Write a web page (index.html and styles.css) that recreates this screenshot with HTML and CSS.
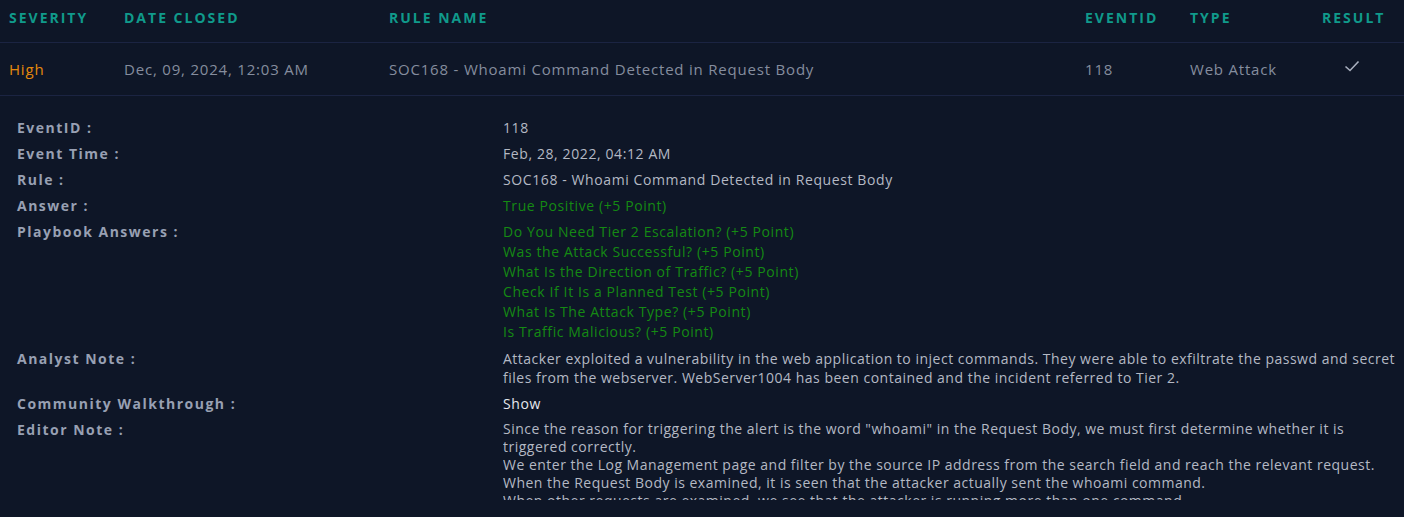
FILE: index.html
```html
<!DOCTYPE html>
<html lang="en">
<head>
    <meta charset="UTF-8">
    <title>Investigated Alerts</title>
    <link rel="stylesheet" href="styles.css">
</head>
<body>
    <table class="alerts">
        <thead>
            <tr>
                <th class="c-sev">Severity</th>
                <th class="c-date">Date Closed</th>
                <th class="c-rule">Rule Name</th>
                <th class="c-id">EventID</th>
                <th class="c-type">Type</th>
                <th class="c-res">Result</th>
            </tr>
        </thead>
        <tbody>
            <tr>
                <td class="high">High</td>
                <td>Dec, 09, 2024, 12:03 AM</td>
                <td>SOC168 - Whoami Command Detected in Request Body</td>
                <td>118</td>
                <td>Web Attack</td>
                <td class="c-res">
                    <svg class="check" width="16" height="12" viewBox="0 0 16 12"><path d="M1.5 6.5 L6 10.5 L14.5 1.5" fill="none" stroke="#a9b0bf" stroke-width="1.6"/></svg>
                </td>
            </tr>
        </tbody>
    </table>

    <div class="details">
        <div class="row"><div class="label">EventID :</div><div class="value">118</div></div>
        <div class="row"><div class="label">Event Time :</div><div class="value">Feb, 28, 2022, 04:12 AM</div></div>
        <div class="row"><div class="label">Rule :</div><div class="value">SOC168 - Whoami Command Detected in Request Body</div></div>
        <div class="row"><div class="label">Answer :</div><div class="value ok">True Positive (+5 Point)</div></div>
        <div class="row"><div class="label">Playbook Answers :</div>
            <div class="value ok">
                <div>Do You Need Tier 2 Escalation? (+5 Point)</div>
                <div>Was the Attack Successful? (+5 Point)</div>
                <div>What Is the Direction of Traffic? (+5 Point)</div>
                <div>Check If It Is a Planned Test (+5 Point)</div>
                <div>What Is The Attack Type? (+5 Point)</div>
                <div>Is Traffic Malicious? (+5 Point)</div>
            </div>
        </div>
        <div class="row"><div class="label">Analyst Note :</div><div class="value note">Attacker exploited a vulnerability in the web application to inject commands. They were able to exfiltrate the passwd and secret files from the webserver. WebServer1004 has been contained and the incident referred to Tier 2.</div></div>
        <div class="row"><div class="label">Community Walkthrough :</div><div class="value show">Show</div></div>
        <div class="row"><div class="label">Editor Note :</div>
            <div class="value note editor">
                Since the reason for triggering the alert is the word "whoami" in the Request Body, we must first determine whether it is triggered correctly.<br>
                We enter the Log Management page and filter by the source IP address from the search field and reach the relevant request.<br>
                When the Request Body is examined, it is seen that the attacker actually sent the whoami command.<br>
                When other requests are examined, we see that the attacker is running more than one command.<br>
                The attacker was able to read the passwd and secret files.
            </div>
        </div>
    </div>
</body>
</html>
```

FILE: styles.css
```css
body { margin: 0; background: #0e1627; font-family: "Open Sans", sans-serif; color: #a3aab8; }

.alerts { width: 100%; border-collapse: collapse; }
.alerts th { text-align: left; height: 34px; padding: 0 0 8px 9px; font-size: 14px; font-weight: 700; letter-spacing: 2px; text-transform: uppercase; color: #109a8b; border-bottom: 1px solid #1b2442; }
.alerts td { height: 52px; padding: 0 0 0 9px; font-size: 15px; letter-spacing: 0.8px; color: #858d9e; border-bottom: 1px solid #1b2442; }
.c-sev { width: 106px; }
.c-date { width: 256px; }
.c-rule { width: 687px; }
.c-id { width: 96px; }
.c-type { width: 123px; }
.alerts .high { color: #e5890c; }
.check { vertical-align: middle; margin-left: 22px; position: relative; top: -5px; }

.details { padding: 22px 0 0 17px; font-size: 14px; }
.row { display: flex; margin-bottom: 7px; line-height: 19px; }
.label { width: 486px; flex-shrink: 0; font-weight: 700; letter-spacing: 1.5px; color: #98a0b3; }
.value { flex: 1; color: #b4b9c4; letter-spacing: 0.6px; }
.value.ok { color: #158a13; }
.value.ok div { line-height: 20px; }
.value.note { line-height: 19px; letter-spacing: 0.5px; padding-right: 2px; }
.value.show { color: #e6e8ee; }
.value.editor { line-height: 18px; max-height: 80px; overflow: hidden; }
```
